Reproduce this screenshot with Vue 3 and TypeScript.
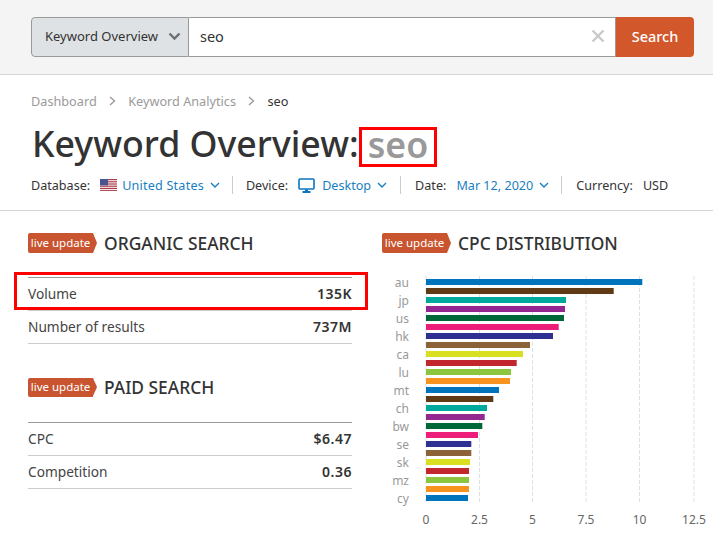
<script setup lang="ts">
const palette = ['#0073bd', '#5f3a14', '#00a99d', '#93278f', '#006837', '#ed1e79', '#2e3192', '#8c6239', '#d9e021', '#c1272d', '#8cc63f', '#f7931e']
const widths = [216.3, 187.7, 140, 139, 138, 132.7, 127, 104, 97, 90.7, 85, 84, 73, 67.3, 61, 58.7, 56.3, 52, 45.3, 45.3, 44, 43, 43, 43, 42]
const labels = ['au', '', 'jp', '', 'us', '', 'hk', '', 'ca', '', 'lu', '', 'mt', '', 'ch', '', 'bw', '', 'se', '', 'sk', '', 'mz', '', 'cy']
const bars = widths.map((w, i) => ({ w, y: 7 + i * 9, color: palette[i % 12], label: labels[i] }))
const ticks = [
  { x: 44, t: '0' }, { x: 97.5, t: '2.5' }, { x: 150.5, t: '5' },
  { x: 204, t: '7.5' }, { x: 257.5, t: '10' }, { x: 312, t: '12.5' },
]
const organic = [{ k: 'Volume', v: '135K' }, { k: 'Number of results', v: '737M' }]
const paid = [{ k: 'CPC', v: '$6.47' }, { k: 'Competition', v: '0.36' }]
</script>

<template>
  <div class="page">
    <header class="top">
      <div class="search">
        <div class="select">
          <span>Keyword Overview</span>
          <svg width="13" height="9" viewBox="0 0 13 9"><path d="M1.5 1.5 6.5 6.5 11.5 1.5" fill="none" stroke="#6b6f73" stroke-width="2.4" /></svg>
        </div>
        <div class="input">
          <span>seo</span>
          <svg width="14" height="14" viewBox="0 0 14 14"><path d="M1.5 1.5 12.5 12.5M12.5 1.5 1.5 12.5" stroke="#c9c9c9" stroke-width="2.4" /></svg>
        </div>
        <button class="go">Search</button>
      </div>
    </header>

    <section class="head">
      <nav class="crumbs">
        <span>Dashboard</span>
        <svg class="sep" width="7" height="10" viewBox="0 0 7 10"><path d="M1 1 5.5 5 1 9" fill="none" stroke="#9a9a9a" stroke-width="1.4" /></svg>
        <span>Keyword Analytics</span>
        <svg class="sep" width="7" height="10" viewBox="0 0 7 10"><path d="M1 1 5.5 5 1 9" fill="none" stroke="#9a9a9a" stroke-width="1.4" /></svg>
        <span class="cur">seo</span>
      </nav>
      <h1 class="title">Keyword Overview:<span class="q">seo</span></h1>
      <div class="meta">
        <div class="m m1">
          <span>Database:</span>
          <svg class="flag" width="17" height="12" viewBox="0 0 17 12">
            <rect width="17" height="12" fill="#fff" />
            <path d="M0 .5H17M0 2.3H17M0 4.1H17M0 5.9H17M0 7.7H17M0 9.5H17M0 11.4H17" stroke="#a83a4c" stroke-width="1" />
            <rect width="8" height="6.4" fill="#4a5590" />
          </svg>
          <a>United States</a>
          <svg class="chev" width="10" height="6" viewBox="0 0 10 6"><path d="M1 1 5 5 9 1" fill="none" stroke="#1a7fc1" stroke-width="1.4" /></svg>
        </div>
        <div class="m m2">
          <span>Device:</span>
          <svg class="mon" width="17" height="15" viewBox="0 0 17 15">
            <rect x="1" y="1" width="15" height="10" rx="1" fill="none" stroke="#0b74bd" stroke-width="1.6" />
            <path d="M7 11.5H10V13H12.5V15H4.5V13H7Z" fill="#0b74bd" />
          </svg>
          <a>Desktop</a>
          <svg class="chev" width="10" height="6" viewBox="0 0 10 6"><path d="M1 1 5 5 9 1" fill="none" stroke="#1a7fc1" stroke-width="1.4" /></svg>
        </div>
        <div class="m m3">
          <span>Date:</span>
          <a>Mar 12, 2020</a>
          <svg class="chev" width="10" height="6" viewBox="0 0 10 6"><path d="M1 1 5 5 9 1" fill="none" stroke="#1a7fc1" stroke-width="1.4" /></svg>
        </div>
        <div class="m m4">
          <span>Currency:</span>
          <span class="usd">USD</span>
        </div>
      </div>
    </section>

    <main class="cols">
      <div class="left">
        <div class="sec organic">
          <div class="sh"><span class="badge">live update</span><h2>ORGANIC SEARCH</h2></div>
          <div class="tbl">
            <div v-for="r in organic" :key="r.k" class="row"><span>{{ r.k }}</span><b>{{ r.v }}</b></div>
            <div class="mark"></div>
          </div>
        </div>
        <div class="sec paid">
          <div class="sh"><span class="badge">live update</span><h2>PAID SEARCH</h2></div>
          <div class="tbl">
            <div v-for="r in paid" :key="r.k" class="row"><span>{{ r.k }}</span><b>{{ r.v }}</b></div>
          </div>
        </div>
      </div>
      <div class="right">
        <div class="sh"><span class="badge">live update</span><h2>CPC DISTRIBUTION</h2></div>
        <svg class="chart" width="331" height="268" viewBox="0 0 331 268">
          <line v-for="t in ticks" :key="t.t" :x1="t.x" :x2="t.x" y1="4" y2="230" stroke="#d5e2e8" stroke-dasharray="4 2" />
          <rect v-for="(b, i) in bars" :key="i" x="44" :y="b.y" :width="b.w" height="6" :fill="b.color" />
          <text v-for="b in bars" :key="b.y + 'l'" x="27" :y="b.y + 7.6" text-anchor="end" class="yl">{{ b.label }}</text>
          <text v-for="t in ticks" :key="t.t + 'x'" :x="t.x" y="252" text-anchor="middle" class="xl">{{ t.t }}</text>
        </svg>
      </div>
    </main>
  </div>
</template>

<style>
html, body { margin: 0; background: #fff; }
</style>

<style scoped>
.page { width: 713px; height: 545px; overflow: hidden; font-family: "Noto Sans", "Open Sans", sans-serif; color: #333; background: #fff; }
.top { box-sizing: border-box; height: 75px; background: #f4f4f4; border-bottom: 1px solid #d4d4d4; padding-left: 31px; padding-top: 17px; }
.search { display: flex; width: 663px; height: 40px; }
.select { width: 158px; box-sizing: border-box; display: flex; align-items: center; justify-content: space-between; padding: 0 7px 2px 13px; background: #dfe2e5; border: 1px solid #999; border-radius: 4px 0 0 4px; font-size: 13px; color: #333; }
.input { flex: 1; display: flex; align-items: center; justify-content: space-between; padding: 0 10px 2px 11px; background: #fff; border: 1px solid #999; border-left: 0; font-size: 14.5px; color: #333; }
.go { width: 78px; border: 0; background: #d2582c; color: #fff; border-radius: 0 4px 4px 0; font: 500 14.5px "Noto Sans", sans-serif; padding: 0 0 2px; }
.head { box-sizing: border-box; height: 136px; border-bottom: 1px solid #d4d4d4; padding: 17px 0 0 31px; }
.crumbs { display: flex; align-items: center; height: 18px; font-size: 12.7px; color: #9a9a9a; }
.sep { margin: 0 12px 0 12.5px; }
.cur { color: #333; }
.title { margin: 11px 0 0 1px; font-size: 35.7px; line-height: 44px; font-weight: 500; color: #333; display: flex; align-items: center; height: 44px; }
.q { box-sizing: border-box; height: 40px; display: inline-flex; align-items: center; border: 3px solid #f00; padding: 0 6px 5px; color: #999; font-weight: 600; margin: 8px 0 0 0; line-height: 1; }
.meta { display: flex; align-items: center; height: 18px; margin-top: 11px; font-size: 12.6px; color: #333; }
.m { display: flex; align-items: center; }
.m a { color: #1a7fc1; }
.chev { margin-left: 6px; }
.flag { margin: 0 5px 0 10px; }
.mon { margin: 0 7px 0 10px; }
.m1 a { letter-spacing: .2px; }
.m1, .m2, .m3 { border-right: 1px solid #ccc; height: 18px; padding-right: 12px; margin-right: 14px; }
.m1 { margin-right: 13px; }
.m2 { padding-right: 13px; }
.m3 a { margin-left: 10px; }
.usd { margin-left: 10px; }
.cols { display: flex; padding: 0 0 0 28px; }
.left { width: 324px; margin-right: 30px; }
.right { flex: 1; padding-top: 22px; }
.sec.organic { padding-top: 22px; }
.sec.paid { padding-top: 34px; }
.sec.paid .sh { height: 19px; }
.sec.paid .badge { height: 19px; line-height: 18px; }
.sec.paid .badge::after { border-top-width: 9.5px; border-bottom-width: 9.5px; }
.sec.paid .tbl { margin-top: 25px; }
.sh { display: flex; align-items: center; height: 20px; }
.badge { position: relative; box-sizing: border-box; width: 65px; height: 20px; line-height: 19px; background: #c8552f; color: #fff; font-size: 11.5px; text-align: center; border-radius: 2px 0 0 2px; white-space: nowrap; }
.badge::after { content: ""; position: absolute; left: 100%; top: 0; border-left: 4px solid #c8552f; border-top: 10px solid transparent; border-bottom: 10px solid transparent; }
.sh h2 { margin: 0 0 1px 11px; font-size: 17.4px; font-weight: 500; color: #333; }
.tbl { position: relative; margin-top: 24px; border-top: 1px solid #999; }
.row { display: flex; align-items: center; justify-content: space-between; height: 33px; box-sizing: border-box; padding-bottom: 2px; border-bottom: 1px solid #ccc; font-size: 13.7px; color: #444; }
.row b { font-weight: 600; color: #333; letter-spacing: .5px; font-size: 14px; }
.mark { position: absolute; left: -14px; top: -6px; width: 354px; height: 38px; box-sizing: border-box; border: 3px solid #f00; pointer-events: none; }
.chart { display: block; margin-top: 19px; }
.yl { font-size: 12px; fill: #999; font-family: "Noto Sans", sans-serif; }
.xl { font-size: 12px; fill: #666; font-family: "Noto Sans", sans-serif; }
</style>
